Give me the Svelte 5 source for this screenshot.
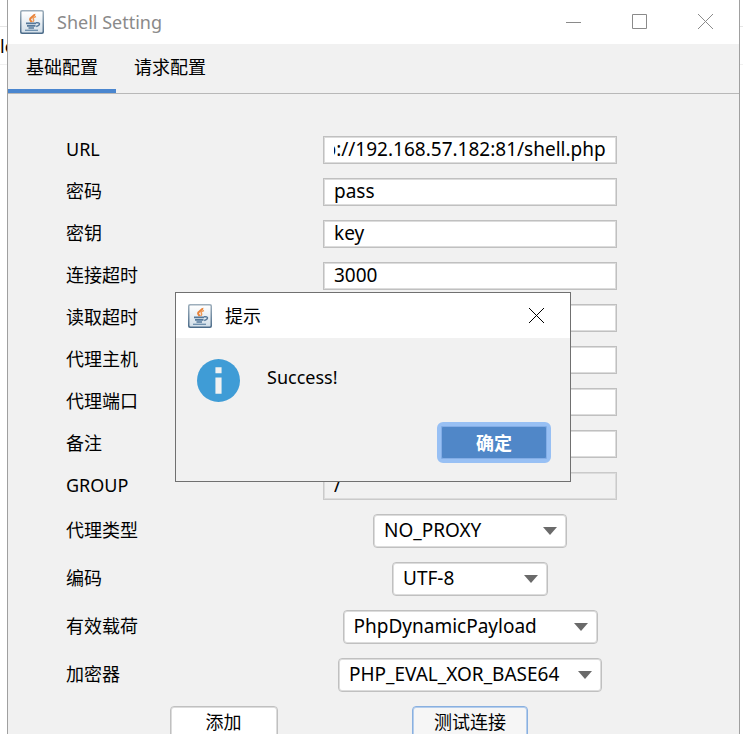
<script>
    import { onMount } from 'svelte';

    let fields = [
        { id: 'url', label: 'URL', value: 'http://192.168.57.182:81/shell.php' },
        { id: 'password', label: '密码', value: 'pass' },
        { id: 'secret', label: '密钥', value: 'key' },
        { id: 'connect-timeout', label: '连接超时', value: '3000' },
        { id: 'read-timeout', label: '读取超时', value: '' },
        { id: 'proxy-host', label: '代理主机', value: '' },
        { id: 'proxy-port', label: '代理端口', value: '' },
        { id: 'remark', label: '备注', value: '' },
        { id: 'group', label: 'GROUP', value: '/', readonly: true }
    ];

    let combos = [
        { id: 'proxy-type', label: '代理类型', value: 'NO_PROXY', width: 194 },
        { id: 'encoding', label: '编码', value: 'UTF-8', width: 156 },
        { id: 'payload', label: '有效载荷', value: 'PhpDynamicPayload', width: 255 },
        { id: 'cryption', label: '加密器', value: 'PHP_EVAL_XOR_BASE64', width: 264 }
    ];

    let tab = 'base';
    let showDialog = true;

    // the caret sits at the end of the url, so keep the tail visible
    onMount(() => {
        const url = document.getElementById('url');
        url.scrollLeft = url.scrollWidth;
    });
</script>

{#snippet javaIcon()}
    <svg class="java" viewBox="0 0 24 24" aria-hidden="true">
        <defs>
            <linearGradient id="frame" x1="0" y1="0" x2="0" y2="1">
                <stop offset="0" stop-color="#9fb0bd" />
                <stop offset="1" stop-color="#4a6a88" />
            </linearGradient>
            <linearGradient id="face" x1="0" y1="0" x2="0" y2="1">
                <stop offset="0" stop-color="#ffffff" />
                <stop offset="1" stop-color="#d3dfe9" />
            </linearGradient>
        </defs>
        <rect x="0" y="0" width="24" height="24" rx="2" fill="url(#frame)" />
        <rect x="1.5" y="1.5" width="21" height="21" rx="1" fill="url(#face)" />
        <path d="M14.5 4c.6 2.200-4.800 3-4.400 5.600.2 1.100 1.100 1.500 1.400 2.600" fill="none" stroke="#e8833a" stroke-width="2" />
        <path d="M16 6.500c-2.400.8-3.400 1.700-2.600 2.900.6.900.2 1.700-.9 2.400" fill="none" stroke="#ee9a58" stroke-width="1.500" />
        <path d="M6 13.300h10M7 15.800h8.500M8.500 18h5.500" fill="none" stroke="#54789a" stroke-width="1.700" />
        <path d="M16 12.800c4.600-.9 4.600 2.600.2 3.600" fill="none" stroke="#54789a" stroke-width="1.500" />
        <path d="M5 20.300h13" fill="none" stroke="#6c8dab" stroke-width="1.300" />
    </svg>
{/snippet}

<main>
    <div class="behind left"><span>lo</span></div>

    <div class="window">
        <header>
            {@render javaIcon()}
            <h1>Shell Setting</h1>
            <button class="control" aria-label="Minimize">
                <svg viewBox="0 0 16 16"><path d="M0 8.500h15" /></svg>
            </button>
            <button class="control" aria-label="Maximize">
                <svg viewBox="0 0 16 16"><path d="M.5.500h14v14H.5z" /></svg>
            </button>
            <button class="control" aria-label="Close">
                <svg viewBox="0 0 16 16"><path d="M0 0l15 15M15 0L0 15" /></svg>
            </button>
        </header>

        <nav>
            <button class:active={tab === 'base'} onclick={() => (tab = 'base')}>基础配置</button>
            <button class:active={tab === 'request'} onclick={() => (tab = 'request')}>请求配置</button>
        </nav>

        <form onsubmit={(e) => e.preventDefault()}>
            {#each fields as field}
                <div class="row">
                    <label for={field.id}>{field.label}</label>
                    <input id={field.id} type="text" readonly={field.readonly} bind:value={field.value} />
                </div>
            {/each}

            {#each combos as combo}
                <div class="row">
                    <label for={combo.id}>{combo.label}</label>
                    <div class="combo" style:width="{combo.width}px">
                        <select id={combo.id} bind:value={combo.value}>
                            <option>{combo.value}</option>
                        </select>
                    </div>
                </div>
            {/each}

            <div class="row">
                <div class="add"><button class="btn">添加</button></div>
                <div class="test"><button class="btn focus">测试连接</button></div>
            </div>
        </form>

        {#if showDialog}
            <div class="dialog" role="dialog" aria-labelledby="dialog-title">
                <div class="dialog-title">
                    {@render javaIcon()}
                    <h2 id="dialog-title">提示</h2>
                    <button class="control" aria-label="Close" onclick={() => (showDialog = false)}>
                        <svg viewBox="0 0 16 16"><path d="M0 0l15 15M15 0L0 15" /></svg>
                    </button>
                </div>
                <div class="message">
                    <svg class="info" viewBox="0 0 42 42" aria-hidden="true">
                        <circle cx="21" cy="21" r="21" fill="#3f9cd6" />
                        <path d="M18 8h6v6h-6zM18 18h6v16h-6z" fill="#f1f1f1" />
                    </svg>
                    <p>Success!</p>
                </div>
                <div class="actions">
                    <button class="ok" onclick={() => (showDialog = false)}>确定</button>
                </div>
            </div>
        {/if}
    </div>

    <div class="behind right"></div>
</main>

<style>
    :global(body) {
        margin: 0;
        background: #fff;
    }

    main {
        display: flex;
        height: 100vh;
        overflow: hidden;
        font-family: 'Noto Sans', 'Noto Sans CJK SC', sans-serif;
        font-size: 18px;
        line-height: 24px;
        color: #000;
    }

    button,
    input,
    select {
        font: inherit;
        color: inherit;
        margin: 0;
    }

    .behind {
        box-sizing: border-box;
        flex: none;
        height: 39px;
        margin-top: 26px;
        padding-top: 7px;
        border-top: 1px solid #e5e5e5;
        border-bottom: 1px solid #f0f0f0;
        overflow: hidden;
    }

    .left {
        width: 7px;
    }

    .right {
        width: 3px;
    }

    .window {
        position: relative;
        display: flex;
        flex-direction: column;
        flex: 1;
        min-width: 0;
        border: solid #a0a0a0;
        border-width: 0 1px;
        background: #f1f1f1;
    }

    header {
        display: flex;
        flex: none;
        align-items: center;
        height: 44px;
        padding-left: 12px;
        background: #fff;
        color: #8a8a8a;
    }

    .java {
        flex: none;
        width: 24px;
        height: 24px;
    }

    h1,
    h2 {
        flex: 1;
        margin: 0 0 0 13px;
        font-size: 18px;
        font-weight: 400;
    }

    .control {
        display: flex;
        align-items: center;
        justify-content: center;
        width: 66px;
        height: 44px;
        padding: 0;
        border: 0;
        background: none;
    }

    .control svg {
        width: 16px;
        height: 16px;
        fill: none;
        stroke: currentColor;
        stroke-width: 1;
    }

    nav {
        display: flex;
        flex: none;
        height: 49px;
        border-bottom: 1px solid #b8b8b8;
    }

    nav button {
        padding: 0 18px;
        border: 0;
        border-bottom: 4px solid transparent;
        background: none;
    }

    nav .active {
        border-bottom-color: #4a86cf;
    }

    form {
        display: flex;
        flex-direction: column;
        gap: 14px;
        padding: 42px 122px 14px 58px;
    }

    .row {
        display: grid;
        grid-template-columns: 257fr 294fr;
        align-items: center;
    }

    label {
        padding-bottom: 2px;
    }

    input {
        box-sizing: border-box;
        width: 100%;
        height: 28px;
        padding: 0 10px 2px;
        border: 1px solid #c0c0c0;
        border-radius: 0;
        box-shadow: inset 0 0 0 1px #dcdcdc;
        background: #fff;
        font-size: 19px;
        outline: 0;
    }

    input:read-only {
        border-color: #cacaca;
        background: #f1f1f1;
    }

    .combo {
        position: relative;
        justify-self: center;
    }

    .combo::after {
        content: '';
        position: absolute;
        top: 13px;
        right: 10px;
        border: solid transparent;
        border-width: 8px 7px 0;
        border-top-color: #6a6a6a;
        pointer-events: none;
    }

    select {
        display: block;
        width: 100%;
        height: 34px;
        padding: 0 10px 2px;
        border: 1px solid #c0c0c0;
        border-radius: 4px;
        box-shadow: inset 0 0 0 1px #dcdcdc;
        background: #fff;
        font-size: 19px;
        appearance: none;
    }

    .add {
        display: flex;
        justify-content: center;
        padding-left: 58px;
    }

    .test {
        display: flex;
        justify-content: center;
    }

    .btn {
        min-width: 108px;
        height: 34px;
        padding: 0 21px 2px;
        border: 1px solid #c0c0c0;
        border-radius: 4px;
        box-shadow: inset 0 0 0 1px #dcdcdc;
        background: #fff;
    }

    .btn.focus {
        border-color: #89b0e0;
        box-shadow: inset 0 0 0 1px #b4cdec;
        background: #f6f6f6;
    }

    .dialog {
        position: absolute;
        top: 292px;
        left: 167px;
        box-sizing: border-box;
        width: 396px;
        border: 1px solid #707070;
        background: #f1f1f1;
    }

    .dialog-title {
        display: flex;
        align-items: center;
        height: 45px;
        padding-left: 12px;
        background: #fff;
    }

    .message {
        display: flex;
        align-items: center;
        gap: 27px;
        padding: 21px 21px 0;
    }

    .info {
        width: 43px;
        height: 43px;
    }

    .message p {
        margin: 0 0 7px;
    }

    .actions {
        display: flex;
        justify-content: flex-end;
        padding: 20px 19px 18px;
    }

    .ok {
        width: 114px;
        height: 41px;
        padding: 0;
        border: 4px solid #98c0f4;
        border-radius: 6px;
        background: #5087c8;
        box-shadow: inset 0 0 0 1px #83ade6;
        color: #fff;
        font-weight: 700;
    }
</style>
